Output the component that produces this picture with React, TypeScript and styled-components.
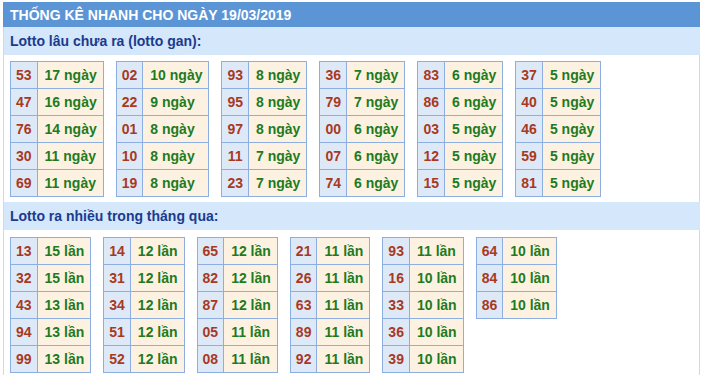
import React from "react";
import styled, { createGlobalStyle } from "styled-components";

const Global = createGlobalStyle`
  html, body { margin: 0; padding: 0; background: #fff; }
  body { font-family: Arial, "Liberation Sans", sans-serif; }
`;

const Wrap = styled.div`
  margin: 2px 3px 0 3px;
  width: 697px;
`;

const Title = styled.div`
  height: 25px;
  background: #5b95d6;
  color: #fff;
  font-weight: bold;
  font-size: 14px;
  line-height: 26px;
  padding-left: 7px;
`;

const Body = styled.div`
  border-left: 1px solid #d3d8e0;
  border-right: 1px solid #d3d8e0;
  padding-bottom: 6px;
`;

const SubHead = styled.div<{ $mt?: number }>`
  height: 28px;
  margin-top: ${(p) => p.$mt ?? 0}px;
  margin-right: -1px;
  background: #d4e7fb;
  color: #1b3b8e;
  font-weight: bold;
  font-size: 14px;
  line-height: 28px;
  padding-left: 6px;
`;

const Grid = styled.div<{ $gap: number; $mt: number }>`
  display: flex;
  align-items: flex-start;
  gap: ${(p) => p.$gap}px;
  padding-left: 6px;
  margin-top: ${(p) => p.$mt}px;
`;

const Table = styled.table`
  border-collapse: collapse;
  font-size: 14px;
  font-weight: bold;
`;

const NumCell = styled.td`
  height: 26px;
  padding: 0 5px;
  border: 1px solid #8daee0;
  background: #dee9f8;
  color: #a8391f;
  text-align: center;
`;

const ValCell = styled.td`
  height: 26px;
  padding: 0 6px 0 7px;
  border: 1px solid #8daee0;
  background: #fdf2e2;
  color: #1e7b1e;
  white-space: nowrap;
`;

type Pair = [string, string];

const gan: Pair[][] = [
  [["53", "17"], ["47", "16"], ["76", "14"], ["30", "11"], ["69", "11"]],
  [["02", "10"], ["22", "9"], ["01", "8"], ["10", "8"], ["19", "8"]],
  [["93", "8"], ["95", "8"], ["97", "8"], ["11", "7"], ["23", "7"]],
  [["36", "7"], ["79", "7"], ["00", "6"], ["07", "6"], ["74", "6"]],
  [["83", "6"], ["86", "6"], ["03", "5"], ["12", "5"], ["15", "5"]],
  [["37", "5"], ["40", "5"], ["46", "5"], ["59", "5"], ["81", "5"]],
];

const nhieu: Pair[][] = [
  [["13", "15"], ["32", "15"], ["43", "13"], ["94", "13"], ["99", "13"]],
  [["14", "12"], ["31", "12"], ["34", "12"], ["51", "12"], ["52", "12"]],
  [["65", "12"], ["82", "12"], ["87", "12"], ["05", "11"], ["08", "11"]],
  [["21", "11"], ["26", "11"], ["63", "11"], ["89", "11"], ["92", "11"]],
  [["93", "11"], ["16", "10"], ["33", "10"], ["36", "10"], ["39", "10"]],
  [["64", "10"], ["84", "10"], ["86", "10"]],
];

const Block = ({ data, unit }: { data: Pair[][]; unit: string }) => (
  <>
    {data.map((col, i) => (
      <Table key={i}>
        <tbody>
          {col.map(([n, v]) => (
            <tr key={n}>
              <NumCell>{n}</NumCell>
              <ValCell>
                {v} {unit}
              </ValCell>
            </tr>
          ))}
        </tbody>
      </Table>
    ))}
  </>
);

export default function App() {
  return (
    <>
      <Global />
      <Wrap>
        <Title>THỐNG KÊ NHANH CHO NGÀY 19/03/2019</Title>
        <Body>
          <SubHead>Lotto lâu chưa ra (lotto gan):</SubHead>
          <Grid $gap={12} $mt={6}>
            <Block data={gan} unit="ngày" />
          </Grid>
          <SubHead $mt={5}>Lotto ra nhiều trong tháng qua:</SubHead>
          <Grid $gap={12} $mt={7}>
            <Block data={nhieu} unit="lần" />
          </Grid>
        </Body>
      </Wrap>
    </>
  );
}
